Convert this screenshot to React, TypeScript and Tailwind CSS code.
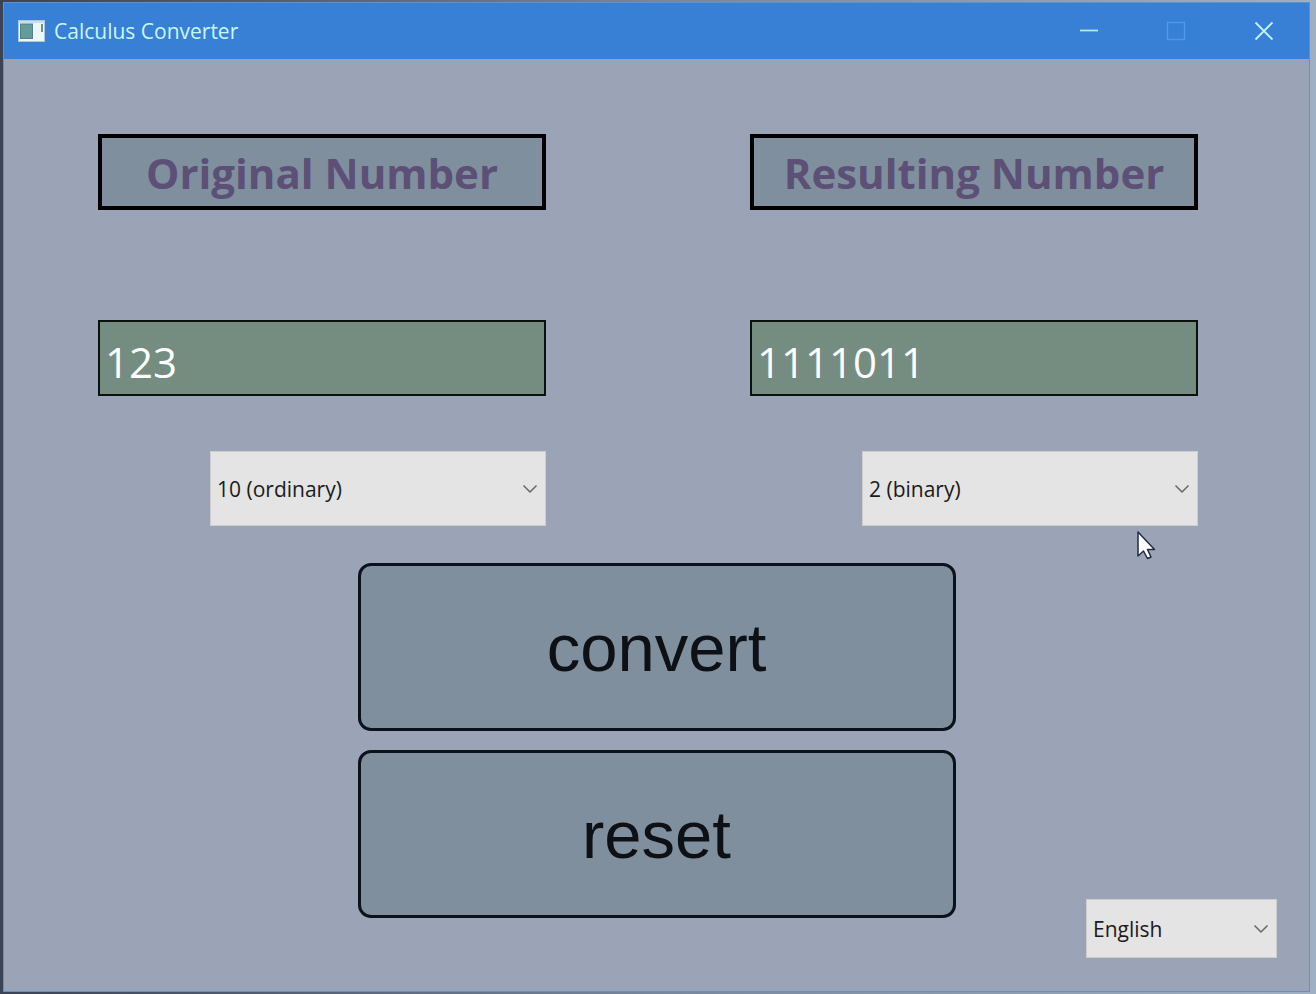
import { useId, useState } from "react";
import type { ReactNode } from "react";

type Option = { value: string; label: string };

const BASES: Option[] = [
  { value: "2", label: "2 (binary)" },
  { value: "8", label: "8 (octal)" },
  { value: "10", label: "10 (ordinary)" },
  { value: "16", label: "16 (hexadecimal)" },
];

const LANGUAGES: Option[] = [{ value: "en", label: "English" }];

function TitleBar() {
  return (
    <header className="flex h-14 items-center bg-[#3880d6] pl-[14px]">
      <svg width="27" height="22" viewBox="0 0 27 22" aria-hidden="true">
        <rect x="0.5" y="0.5" width="26" height="21" fill="#eef6f6" stroke="#a9c9dc" />
        <rect x="1" y="1" width="25" height="2" fill="#c9dfe8" />
        <rect x="2.5" y="4" width="12" height="14.5" fill="#649c97" stroke="#577f92" />
        <rect x="23" y="4" width="2" height="8" fill="#6b8f8c" />
      </svg>
      <h1 className="ml-[9px] flex-1 text-[21px] leading-7 text-[#c9f6fb]">Calculus Converter</h1>
      <button type="button" aria-label="Minimize" className="flex h-full w-[87px] items-center justify-center">
        <svg width="20" height="20" viewBox="0 0 20 20" aria-hidden="true">
          <path d="M1 9.5H19" stroke="#b4e9ee" strokeWidth="1.8" />
        </svg>
      </button>
      <button type="button" aria-label="Maximize" disabled className="flex h-full w-[87px] items-center justify-center">
        <svg width="20" height="20" viewBox="0 0 20 20" aria-hidden="true">
          <rect x="1.5" y="1.5" width="17" height="17" fill="none" stroke="#4a9be8" strokeWidth="1.3" />
        </svg>
      </button>
      <button type="button" aria-label="Close" className="flex h-full w-[90px] items-center justify-center">
        <svg width="20" height="20" viewBox="0 0 20 20" aria-hidden="true">
          <path d="M1.5 1.5L18.5 18.5M18.5 1.5L1.5 18.5" stroke="#c4f3f6" strokeWidth="1.8" />
        </svg>
      </button>
    </header>
  );
}

function Dropdown({
  label,
  value,
  options,
  onChange,
  tall,
}: {
  label: string;
  value: string;
  options: Option[];
  onChange: (value: string) => void;
  tall?: boolean;
}) {
  return (
    <div className="relative">
      <select
        aria-label={label}
        value={value}
        onChange={(e) => onChange(e.target.value)}
        className={`block w-full appearance-none border border-[#cfcdcc] bg-[#e4e4e4] pl-[6px] pr-9 pt-[2px] text-[21px] text-[#1b1b1b] ${
          tall ? "h-[75px]" : "h-[59px]"
        }`}
      >
        {options.map((o) => (
          <option key={o.value} value={o.value}>
            {o.label}
          </option>
        ))}
      </select>
      <svg
        className="pointer-events-none absolute inset-y-0 right-2 my-auto"
        width="16"
        height="10"
        viewBox="0 0 16 10"
        aria-hidden="true"
      >
        <path d="M1.5 1.5L8 8L14.5 1.5" fill="none" stroke="#666" strokeWidth="1.5" />
      </svg>
    </div>
  );
}

function NumberColumn({
  title,
  value,
  onValue,
  readOnly,
  children,
}: {
  title: string;
  value: string;
  onValue?: (value: string) => void;
  readOnly?: boolean;
  children: ReactNode;
}) {
  const id = useId();
  return (
    <div className="flex flex-col">
      <label
        htmlFor={id}
        className="flex h-[76px] items-center justify-center whitespace-nowrap border-4 border-black bg-[#808f9e] text-[42px] font-bold text-[#5c5076]"
      >
        {title}
      </label>
      <input
        id={id}
        type="text"
        value={value}
        readOnly={readOnly}
        onChange={(e) => onValue?.(e.target.value)}
        className="mt-[110px] h-[76px] w-full border-2 border-[#0a120e] bg-[#758d80] pl-[5px] pt-[6px] text-[42px] text-white outline-none"
      />
      <div className="ml-auto mt-[55px] w-3/4">{children}</div>
    </div>
  );
}

function ActionButton({ children, onClick }: { children: ReactNode; onClick: () => void }) {
  return (
    <button
      type="button"
      onClick={onClick}
      className="h-[168px] w-full rounded-[13px] border-3 border-[#0b121c] bg-[#808f9d] font-['Liberation_Sans',sans-serif] text-[67px] leading-none text-[#0d1015]"
    >
      {children}
    </button>
  );
}

function Pointer() {
  return (
    <svg
      className="pointer-events-none absolute left-[1132px] top-[527px]"
      width="20"
      height="30"
      viewBox="0 0 20 30"
      aria-hidden="true"
    >
      <path
        d="M2 2V26L7.5 21L11.5 28.5L15 27L11.5 19.5H18.5Z"
        fill="#fff"
        stroke="#25284f"
        strokeWidth="1.5"
        strokeLinejoin="round"
      />
    </svg>
  );
}

export default function App() {
  const [source, setSource] = useState("123");
  const [result, setResult] = useState("1111011");
  const [fromBase, setFromBase] = useState("10");
  const [toBase, setToBase] = useState("2");
  const [language, setLanguage] = useState("en");

  const convert = () => {
    const n = parseInt(source, Number(fromBase));
    setResult(Number.isNaN(n) ? "" : n.toString(Number(toBase)));
  };
  const reset = () => {
    setSource("");
    setResult("");
  };

  return (
    <div className="flex min-h-screen bg-linear-to-r from-[#3b4356] from-0% via-[#77879d] via-50% to-[#9fb0c4] pb-[2px] pl-[3px] pr-[6px] pt-[2px] font-['Open_Sans',sans-serif]">
      <div className="relative flex flex-1 flex-col border border-[#5b93cb] bg-[#9ba3b6]">
        <TitleBar />
        <main className="flex flex-1 flex-col">
          <section className="grid grid-cols-2 gap-[204px] pl-[94px] pr-[111px] pt-[75px]">
            <NumberColumn title="Original Number" value={source} onValue={setSource}>
              <Dropdown label="Original base" value={fromBase} options={BASES} onChange={setFromBase} tall />
            </NumberColumn>
            <NumberColumn title="Resulting Number" value={result} readOnly>
              <Dropdown label="Resulting base" value={toBase} options={BASES} onChange={setToBase} tall />
            </NumberColumn>
          </section>
          <section className="mt-[37px] grid grid-cols-[1fr_minmax(0,598px)_1fr]">
            <div className="col-start-2 flex flex-col gap-[19px] pb-10">
              <ActionButton onClick={convert}>convert</ActionButton>
              <ActionButton onClick={reset}>reset</ActionButton>
            </div>
            <div className="mr-8 w-[191px] self-end justify-self-end">
              <Dropdown label="Language" value={language} options={LANGUAGES} onChange={setLanguage} />
            </div>
          </section>
        </main>
        <Pointer />
      </div>
    </div>
  );
}
